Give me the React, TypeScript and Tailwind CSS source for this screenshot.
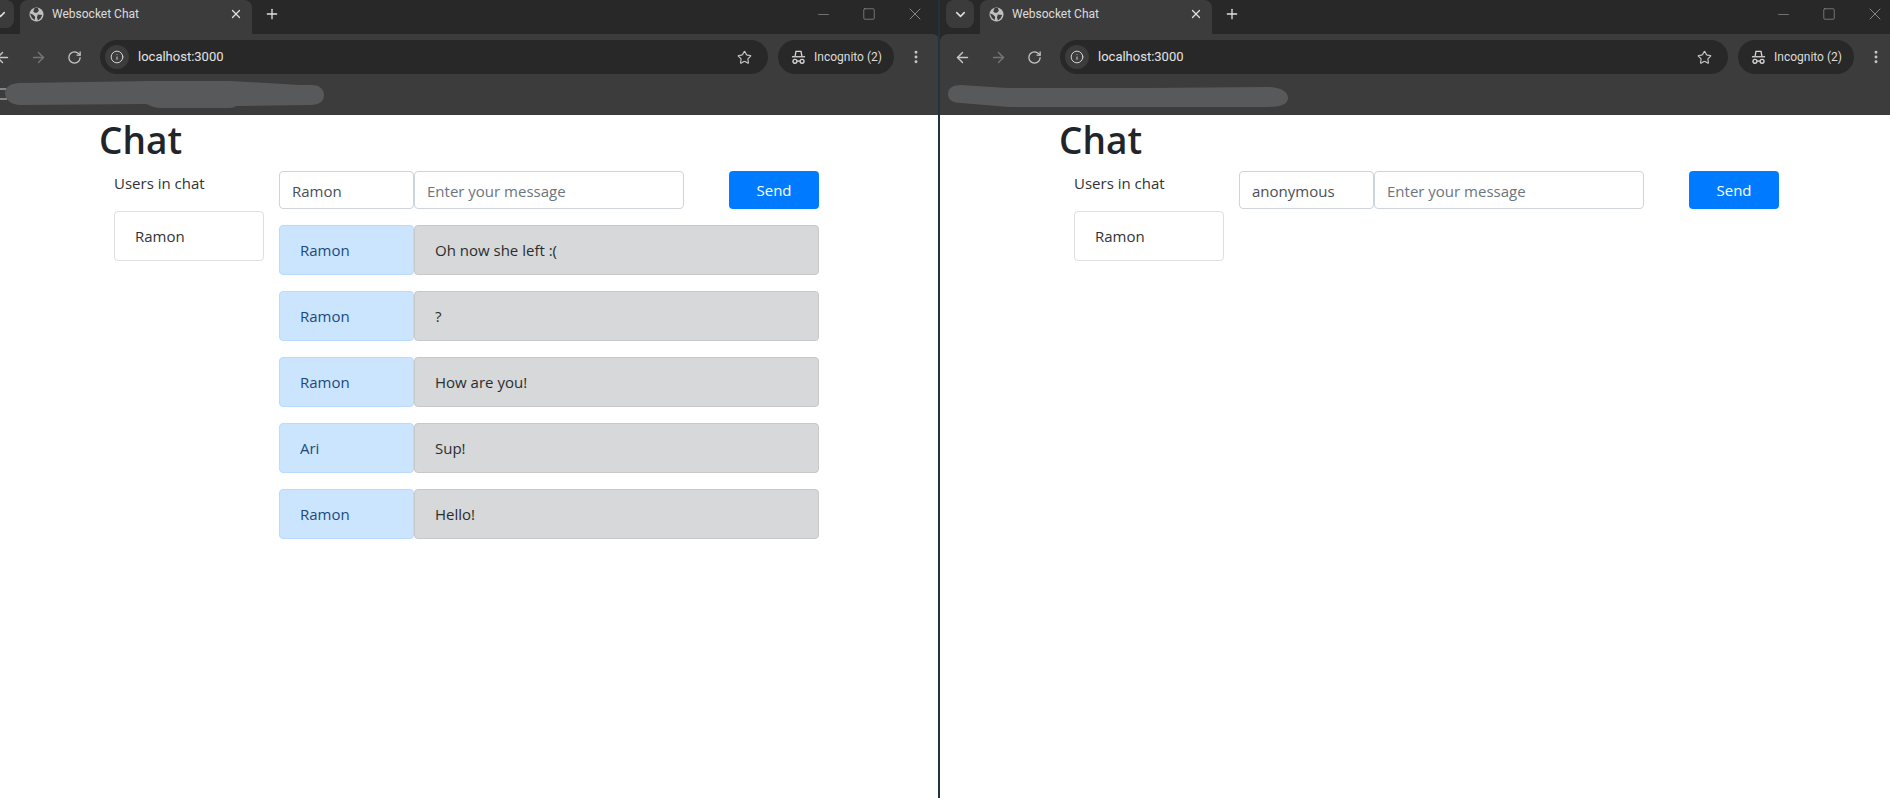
import React from 'react';
import { ArrowLeft, ArrowRight, ChevronDown, EllipsisVertical, Info, Minus, Plus, RotateCw, Square, Star, X } from 'lucide-react';

interface Message {
  user: string;
  text: string;
}

interface ChromeWindowProps {
  shift: string;
  widthClass: string;
  userName: string;
  messages: Message[];
  bookmarks: React.ReactNode;
}

const leftMessages: Message[] = [
  { user: 'Ramon', text: 'Oh now she left :(' },
  { user: 'Ramon', text: '?' },
  { user: 'Ramon', text: 'How are you!' },
  { user: 'Ari', text: 'Sup!' },
  { user: 'Ramon', text: 'Hello!' },
];

const GlobeIcon = () => (
  <svg width="15" height="15" viewBox="0 0 16 16">
    <circle cx="8" cy="8" r="7.5" fill="#c0c0c0" />
    <path d="M6 1 L9.5 1 L10.5 4 L8.5 6 L6 6 L4.5 4.5 Z M9.5 8 L14 8.5 L12.5 12 L9.5 14.5 L8.5 11 Z M1 7 L4 8 L6.5 10.5 L6 14 L3 11.5 Z" fill="#3c3c3c" />
  </svg>
);

const IncognitoIcon = () => (
  <svg width="15" height="15" viewBox="0 0 16 16" fill="none" stroke="#d6d6d6" strokeWidth="1.4">
    <path d="M4.4 6.6 L5.3 1.4 H10.7 L11.6 6.6" />
    <path d="M1 7.2 H15" />
    <circle cx="4.2" cy="12" r="2.1" />
    <circle cx="11.8" cy="12" r="2.1" />
    <path d="M6.3 11.8 H9.7" />
  </svg>
);

// scribbled-out bookmarks, hand drawn in the screenshot
const LeftScribble = () => (
  <svg width="321" height="29" viewBox="0 0 321 29" overflow="visible" className="mt-[6px] ml-[24px]">
    <path d="M-4 9 H3 M-4 19 H3" stroke="#cfcfcf" strokeWidth="1.2" />
    <path
      d="M1 13 C1 6 8 3.5 16 3 L146 1 L226 1 L296 5 L308 5 C316 5 320 10 320 15 C320 21 316 25 306 25 L232 26 C230 28 226 28 222 28 L156 28 C150 28 146 25 142 24 L16 25 C8 25 1 20 1 13 Z"
      fill="#58595b"
    />
  </svg>
);

const RightScribble = () => (
  <svg width="342" height="24" viewBox="0 0 342 24" className="mt-[10px] ml-[7px]">
    <path
      d="M1 10 C1 4 6 1 14 1 L60 4 L200 4 L320 3 C334 3 341 8 341 14 C341 20 334 23 320 23 L100 23 L62 23 L14 19 C6 19 1 16 1 10 Z"
      fill="#58595b"
    />
  </svg>
);

const ChromeWindow = ({ shift, widthClass, userName, messages, bookmarks }: ChromeWindowProps) => (
  <div className={`${widthClass} h-full shrink-0 overflow-hidden bg-white`}>
    <div className={`${shift} w-[960px]`}>
      <div className="bg-[#282828]">
        <div className="flex h-[34px] items-start">
          <div className="ml-[6px] flex h-[28px] w-[28px] shrink-0 items-center justify-center rounded-lg bg-[#3b3b3b]">
            <ChevronDown size={15} strokeWidth={2.5} color="#dddddd" />
          </div>
          <div className="ml-[6px] flex h-[34px] w-[232px] shrink-0 items-center rounded-t-lg bg-[#3c3c3c] pr-[9px] pb-[6px] pl-[9px]">
            <GlobeIcon />
            <span className="ml-[8px] flex-1 font-['Roboto',sans-serif] text-[12px] text-[#dcdcdc]">Websocket Chat</span>
            <X size={14} strokeWidth={2.2} color="#e0e0e0" />
          </div>
          <Plus size={16} strokeWidth={2} color="#e0e0e0" className="mt-[6px] ml-[12px] shrink-0" />
          <div className="mt-[4px] mr-[15px] ml-auto flex w-[110px] items-center justify-between">
            <Minus size={17} strokeWidth={0.9} color="#9a9a9a" />
            <Square size={14} strokeWidth={1} color="#a5a5a5" />
            <X size={20} strokeWidth={0.9} color="#a5a5a5" />
          </div>
        </div>
        <div className="flex h-[40px] items-end rounded-t-lg bg-[#3c3c3c]">
          <ArrowLeft size={17} strokeWidth={2} color="#c8c8c8" className="mb-[8px] ml-[14px]" />
          <ArrowRight size={17} strokeWidth={2} color="#757575" className="mb-[8px] ml-[19px]" />
          <RotateCw size={15} strokeWidth={2} color="#c8c8c8" className="mb-[9px] ml-[20px]" />
          <div className="ml-[18px] flex h-[34px] w-[668px] items-center rounded-full bg-[#282828] pl-[5px]">
            <div className="flex h-[24px] w-[24px] items-center justify-center rounded-full bg-[#3c3c3c]">
              <Info size={14} strokeWidth={1.6} color="#dcdcdc" />
            </div>
            <span className="ml-[9px] flex-1 font-['Roboto',sans-serif] text-[13px] text-[#e4e4e4]">localhost:3000</span>
            <Star size={15} strokeWidth={1.8} color="#c8c8c8" className="mr-[16px]" />
          </div>
          <div className="ml-[10px] flex h-[34px] w-[116px] items-center rounded-full bg-[#282828] pl-[13px]">
            <IncognitoIcon />
            <span className="ml-[8px] font-['Roboto',sans-serif] text-[12px] whitespace-nowrap text-[#dcdcdc]">Incognito (2)</span>
          </div>
          <EllipsisVertical size={16} strokeWidth={2.4} color="#c8c8c8" className="mb-[9px] ml-[14px]" />
        </div>
        <div className="flex h-[41px] items-start bg-[#3c3c3c]">{bookmarks}</div>
      </div>

      <main className="font-['Open_Sans',sans-serif] text-[16px] leading-[24px] text-[#2f3337]">
        <h1 className="mb-[8px] pt-[1px] pl-[119px] text-[37px] leading-[47px] font-semibold text-[#212529]">Chat</h1>
        <div className="flex gap-[15px] pl-[134px]">
          <aside className="w-[150px]">
            <p className="mb-[16px] text-[15px]">Users in chat</p>
            <div className="rounded border border-[#dfdfdf] px-[20px] py-[12px] text-[15px]">Ramon</div>
          </aside>
          <section className="w-[540px]">
            <form className="mb-[16px] flex">
              <input
                readOnly
                value={userName}
                className="h-[38px] w-[135px] rounded border border-[#ced4da] px-[12px] pt-[2px] text-[15px] text-[#495057] outline-none"
              />
              <input
                readOnly
                placeholder="Enter your message"
                className="h-[38px] w-[270px] rounded border border-[#ced4da] px-[12px] pt-[2px] text-[15px] outline-none placeholder:text-[#6c757d]"
              />
              <button type="button" className="ml-[45px] h-[38px] w-[90px] rounded bg-[#007bff] text-[15px] text-white">
                Send
              </button>
            </form>
            <div className="flex flex-col gap-[16px]">
              {messages.map((m, i) => (
                <div key={i} className="flex h-[50px] text-[15px]">
                  <div className="flex w-[135px] items-center rounded border border-[#b8daff] bg-[#cce5ff] px-[20px] text-[#1b4a80]">
                    {m.user}
                  </div>
                  <div className="flex flex-1 items-center rounded border border-[#c6c8ca] bg-[#d6d8d9] px-[20px] text-[#2a2d30]">
                    {m.text}
                  </div>
                </div>
              ))}
            </div>
          </section>
        </div>
      </main>
    </div>
  </div>
);

export default function App() {
  return (
    <div className="flex h-[798px] w-[1890px] overflow-hidden bg-white">
      <ChromeWindow
        shift="ml-[-20px]"
        widthClass="w-[938px]"
        userName="Ramon"
        messages={leftMessages}
        bookmarks={<LeftScribble />}
      />
      <div className="h-full w-[2px] shrink-0 bg-[#24323d]" />
      <ChromeWindow shift="ml-0" widthClass="w-[950px]" userName="anonymous" messages={[]} bookmarks={<RightScribble />} />
    </div>
  );
}
